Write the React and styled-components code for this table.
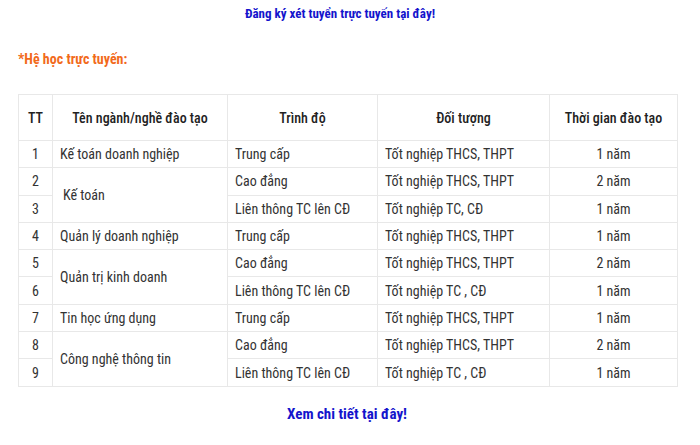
import React from "react"
import styled, { createGlobalStyle } from "styled-components"

const GlobalStyle = createGlobalStyle`
  body {
    margin: 0;
    background: #fff;
    font-family: Roboto, "Liberation Sans", sans-serif;
  }
`

const rows = [
  { tt: 1, name: "Kế toán doanh nghiệp", span: 1, level: "Trung cấp", target: "Tốt nghiệp THCS, THPT", time: "1 năm" },
  { tt: 2, name: "Kế toán", span: 2, indent: true, level: "Cao đẳng", target: "Tốt nghiệp THCS, THPT", time: "2 năm" },
  { tt: 3, level: "Liên thông TC lên CĐ", target: "Tốt nghiệp TC, CĐ", time: "1 năm" },
  { tt: 4, name: "Quản lý doanh nghiệp", span: 1, level: "Trung cấp", target: "Tốt nghiệp THCS, THPT", time: "1 năm" },
  { tt: 5, name: "Quản trị kinh doanh", span: 2, level: "Cao đẳng", target: "Tốt nghiệp THCS, THPT", time: "2 năm" },
  { tt: 6, level: "Liên thông TC lên CĐ", target: "Tốt nghiệp TC , CĐ", time: "1 năm" },
  { tt: 7, name: "Tin học ứng dụng", span: 1, level: "Trung cấp", target: "Tốt nghiệp THCS, THPT", time: "1 năm" },
  { tt: 8, name: "Công nghệ thông tin", span: 2, level: "Cao đẳng", target: "Tốt nghiệp THCS, THPT", time: "2 năm" },
  { tt: 9, level: "Liên thông TC lên CĐ", target: "Tốt nghiệp TC , CĐ", time: "1 năm" },
]

const App = () => {
  return (
    <Page>
      <GlobalStyle />
      <LinkLine $shift="20px">
        <BlueLink href="#" $size="13px">
          Đăng ký xét tuyển trực tuyến tại đây!
        </BlueLink>
      </LinkLine>
      <Heading>*Hệ học trực tuyến:</Heading>
      <Table>
        <colgroup>
          <col style={{ width: 34 }} />
          <col style={{ width: 175 }} />
          <col style={{ width: 150 }} />
          <col style={{ width: 172 }} />
          <col style={{ width: 128 }} />
        </colgroup>
        <thead>
          <tr>
            <Th>TT</Th>
            <Th>Tên ngành/nghề đào tạo</Th>
            <Th>Trình độ</Th>
            <Th>Đối tượng</Th>
            <Th>Thời gian đào tạo</Th>
          </tr>
        </thead>
        <tbody>
          {rows.map((r) => (
            <tr key={r.tt}>
              <Td $center>{r.tt}</Td>
              {r.name && (
                <Td rowSpan={r.span} $indent={r.indent}>
                  {r.name}
                </Td>
              )}
              <Td>{r.level}</Td>
              <Td>{r.target}</Td>
              <Td $center>{r.time}</Td>
            </tr>
          ))}
        </tbody>
      </Table>
      <LinkLine $bottom $shift="6px">
        <BlueLink href="#" $size="15px">
          Xem chi tiết tại đây!
        </BlueLink>
      </LinkLine>
    </Page>
  )
}

export default App

const Page = styled.div`
  width: 700px;
  padding: 4px 0 0;
`

const LinkLine = styled.div`
  text-align: center;
  line-height: 18px;
  padding-right: ${(p) => p.$shift || "0"};
  margin-top: ${(p) => (p.$bottom ? "18px" : "0")};
`

const BlueLink = styled.a`
  font-family: Roboto, sans-serif;
  font-stretch: condensed;
  font-weight: 700;
  font-size: ${(p) => p.$size};
  color: #1414cc;
  text-decoration: none;
`

const Heading = styled.div`
  margin: 27px 0 0 18px;
  font-family: Roboto, sans-serif;
  font-stretch: condensed;
  font-weight: 700;
  font-size: 14px;
  line-height: 18px;
  color: #f26a1b;
`

const Table = styled.table`
  margin: 26px 0 0 18px;
  width: 659px;
  border-collapse: collapse;
  table-layout: fixed;
  font-family: Roboto, sans-serif;
  font-stretch: condensed;
  font-size: 14px;
  color: #333;
`

const Th = styled.th`
  height: 45px;
  padding: 0 6px;
  border: 1px solid #e8e8e8;
  font-weight: 500;
  text-align: center;
  color: #222;
`

const Td = styled.td`
  height: 26.3px;
  padding: 0 ${(p) => (p.$center ? "4px" : "7px")} 0
    ${(p) => (p.$center ? "4px" : p.$indent ? "10px" : "7px")};
  border: 1px solid #e8e8e8;
  text-align: ${(p) => (p.$center ? "center" : "left")};
  vertical-align: middle;
  white-space: nowrap;
`
